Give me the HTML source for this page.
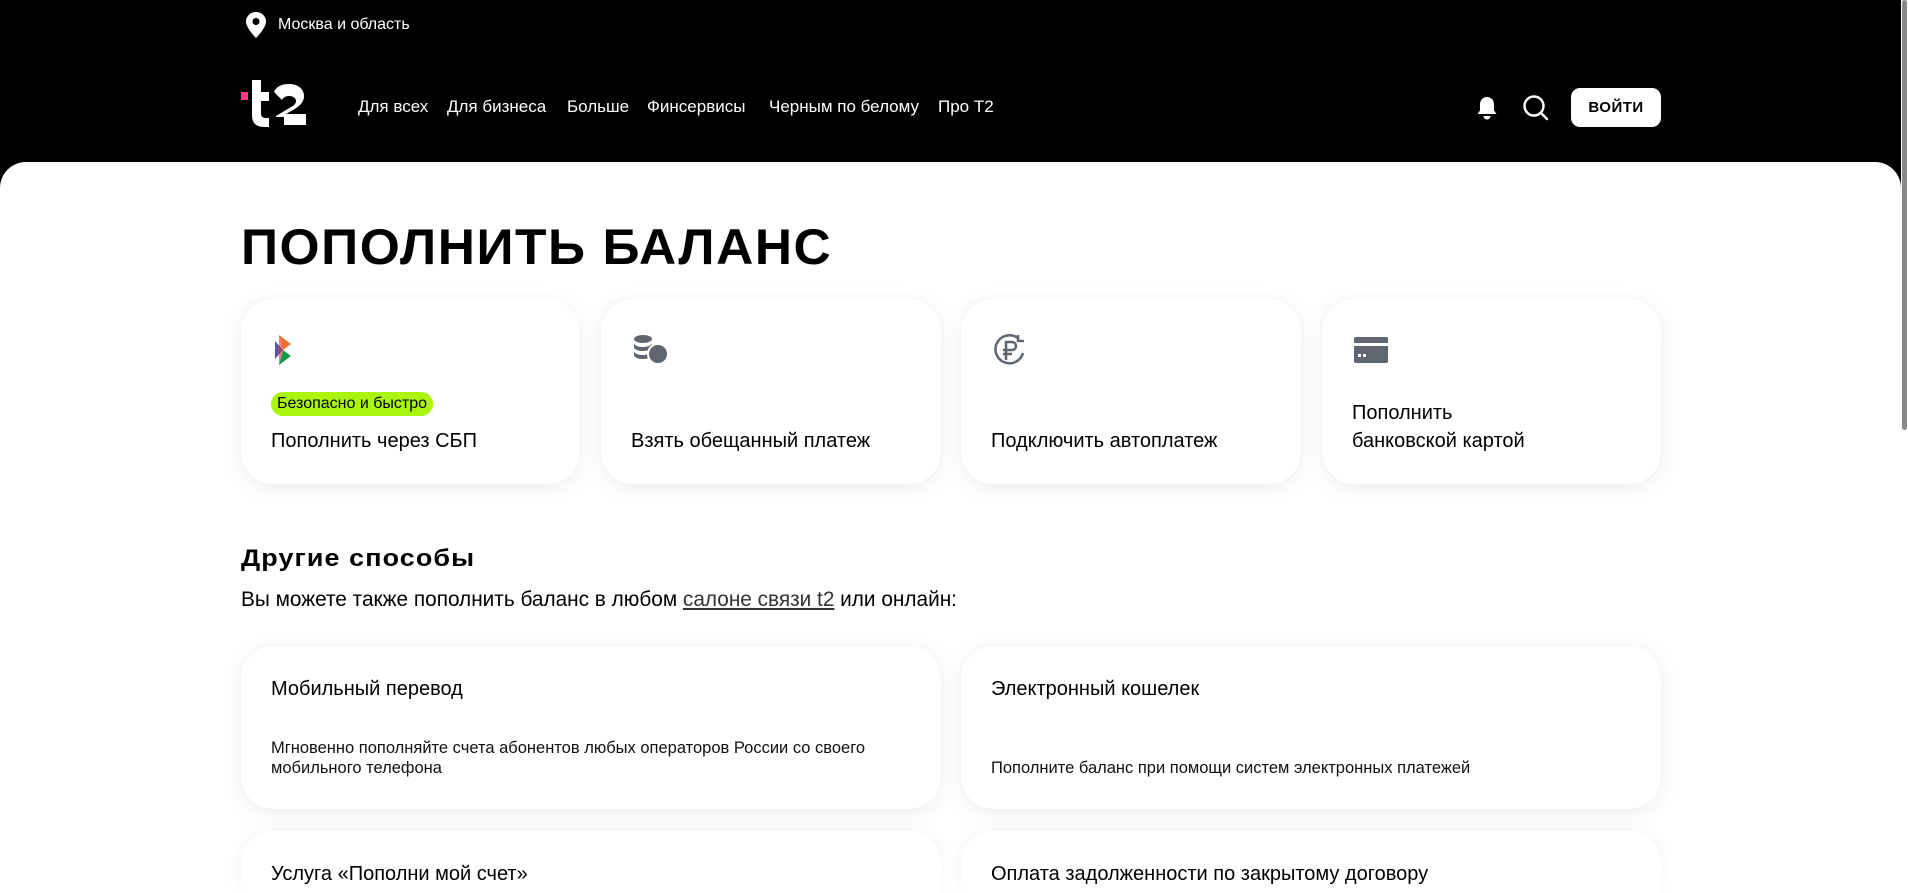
<!DOCTYPE html>
<html><head><meta charset="utf-8">
<style>
*{margin:0;padding:0;box-sizing:border-box}
html,body{width:1908px;height:893px;overflow:hidden;background:#000;font-family:"Liberation Sans",sans-serif;color:#000}
#w{position:relative;width:1908px;height:893px;overflow:hidden}
.top{position:absolute;left:0;top:0;width:1908px;height:170px;background:#000;color:#fff}
.loc{position:absolute;left:246px;top:12px;display:flex;align-items:center;font-size:16px}
.loc svg{margin-right:12px}
.logo{position:absolute;left:241px;top:80px}
.nav{position:absolute;left:358px;top:97px;font-size:17px;display:flex;gap:0}
.nav span{position:absolute;white-space:nowrap}
.btn{position:absolute;left:1571px;top:88px;width:90px;height:39px;background:#fff;color:#000;border-radius:9px;font-weight:900;font-size:15px;letter-spacing:0.5px;display:flex;align-items:center;justify-content:center}
.panel{position:absolute;left:0;top:162px;width:1901px;height:731px;background:#fff;border-radius:26px 26px 0 0}
.sb{position:absolute;left:1901px;top:0;width:7px;height:893px;background:#fff}
.sb i{position:absolute;left:1px;top:0;width:5px;height:430px;background:#8a8a8a;border-radius:3px}
h1{position:absolute;left:241px;top:218px;font-size:50px;font-weight:900;letter-spacing:1.5px;transform:scaleX(1.03);transform-origin:left;white-space:nowrap}
.card{position:absolute;background:#fff;border-radius:32px;box-shadow:0 4px 22px rgba(0,0,0,0.07),0 0 3px rgba(0,0,0,0.03)}
.card.cut{border-radius:32px 32px 0 0;box-shadow:0 -2px 16px rgba(0,0,0,0.05)}
.ico{position:absolute;left:30px;top:36px}
.ct{position:absolute;left:30px;font-size:20px;line-height:28px}
.badge{position:absolute;left:30px;top:93px;height:24px;padding:0 6px;background:#a9f50f;border-radius:12px;font-size:16px;line-height:24px}
h2{position:absolute;left:241px;top:545px;font-size:24px;font-weight:900;letter-spacing:1px;transform:scaleX(1.12);transform-origin:left}
.p{position:absolute;left:241px;top:588px;font-size:20.8px;white-space:nowrap}
.p u{color:#333}
.d{position:absolute;left:30px;font-size:16.5px;line-height:20px;color:#111}
</style></head><body><div id="w">
<div class="top">
 <div class="loc"><svg width="20" height="26" viewBox="0 0 20 26"><path d="M10 0C4.5 0 0 4.3 0 9.6 0 16 10 26 10 26s10-10 10-16.4C20 4.3 15.5 0 10 0z" fill="#fff"/><circle cx="10" cy="9.5" r="3.5" fill="#000"/></svg>Москва и область</div>
 <svg class="logo" width="72" height="50" viewBox="0 0 72 50">
  <rect x="0" y="12" width="7" height="8" fill="#ff3495"/>
  <path d="M11 0h9v12h8v9h-8v12c0 4 2 5 5 5h3v9h-5c-8 0-12-4-12-12z" fill="#fff"/>
  <path d="M33 12c2-5 7-8 15-8 9 0 15 5 15 12 0 6-4 10-11 14l-7 4h20v11H35v-9l15-9c4-2 5-4 5-6 0-3-3-5-7-5-4 0-6 2-7 4z" fill="#fff"/>
  <rect x="33" y="37" width="10" height="11" fill="#000"/>
 </svg>
 <div class="nav">
  <span style="left:0">Для всех</span>
  <span style="left:89px">Для бизнеса</span>
  <span style="left:209px">Больше</span>
  <span style="left:289px">Финсервисы</span>
  <span style="left:411px">Черным по белому</span>
  <span style="left:580px">Про Т2</span>
 </div>
 <svg style="position:absolute;left:1476px;top:96px" width="22" height="24" viewBox="0 0 22 24"><path d="M11 1c-4.5 0-7 3.5-7 7.5v6L1.5 18h19L18 14.5v-6C18 4.5 15.5 1 11 1z" fill="#fff"/><path d="M7.5 20h7c0 2-1.5 3.5-3.5 3.5S7.5 22 7.5 20z" fill="#fff"/></svg>
 <svg style="position:absolute;left:1522px;top:94px" width="28" height="28" viewBox="0 0 28 28"><circle cx="12" cy="12" r="9.5" fill="none" stroke="#fff" stroke-width="2.4"/><path d="M19 19l6 6" stroke="#fff" stroke-width="2.4" stroke-linecap="round"/></svg>
 <div class="btn">ВОЙТИ</div>
</div>
<div class="panel"></div>
<div class="sb"><i></i></div>
<h1>ПОПОЛНИТЬ БАЛАНС</h1>

<div class="card" style="left:241px;top:299px;width:339px;height:185px">
 <svg class="ico" style="left:34px;top:36px" width="16" height="30" viewBox="0 0 16 30"><path d="M0 6l8 9L0 24z" fill="#5b57a2"/><path d="M4 0l12 9-8 6z" fill="#ed702f"/><path d="M8 15l8 6-12 9z" fill="#0f9a4b"/><path d="M4 0l4 15-4 15z" fill="#e32d3b" opacity=".6"/></svg>
 <div class="badge">Безопасно и быстро</div>
 <div class="ct" style="top:128px">Пополнить через СБП</div>
</div>
<div class="card" style="left:601px;top:299px;width:340px;height:185px">
 <svg class="ico" style="left:32px;top:36px" width="38" height="30" viewBox="0 0 38 30"><ellipse cx="10" cy="4" rx="9" ry="4" fill="#5f6670"/><path d="M1 8c0 2.2 4 4 9 4s9-1.8 9-4v4c0 2.2-4 4-9 4s-9-1.8-9-4z" fill="#5f6670"/><path d="M1 16c0 2.2 4 4 9 4s9-1.8 9-4v4c0 2.2-4 4-9 4s-9-1.8-9-4z" fill="#5f6670"/><circle cx="25" cy="19" r="10" fill="#5f6670" stroke="#fff" stroke-width="2"/></svg>
 <div class="ct" style="top:128px">Взять обещанный платеж</div>
</div>
<div class="card" style="left:961px;top:299px;width:340px;height:185px">
 <svg class="ico" style="left:32px;top:34px" width="36" height="34" viewBox="0 0 36 34"><path d="M26 6A14 14 0 1 0 30 20" fill="none" stroke="#5f6670" stroke-width="2.5"/><path d="M25 2v6h6" fill="none" stroke="#5f6670" stroke-width="2.5"/><path d="M13 27V9h6a4 4 0 0 1 0 8h-9M10 21h9" fill="none" stroke="#5f6670" stroke-width="2.5"/></svg>
 <div class="ct" style="top:128px">Подключить автоплатеж</div>
</div>
<div class="card" style="left:1322px;top:299px;width:339px;height:185px">
 <svg class="ico" style="left:32px;top:38px" width="34" height="26" viewBox="0 0 34 26"><rect x="0" y="0" width="34" height="26" rx="2" fill="#5f6670"/><rect x="0" y="6" width="34" height="3" fill="#fff"/><rect x="4" y="17" width="3" height="3" fill="#fff"/><rect x="9" y="17" width="3" height="3" fill="#fff"/></svg>
 <div class="ct" style="top:100px">Пополнить<br>банковской картой</div>
</div>

<h2>Другие способы</h2>
<div class="p">Вы можете также пополнить баланс в любом <u>салоне связи t2</u> или онлайн:</div>

<div class="card" style="left:241px;top:646px;width:700px;height:163px">
 <div class="ct" style="top:29px">Мобильный перевод</div>
 <div class="d" style="top:92px">Мгновенно пополняйте счета абонентов любых операторов России со своего<br>мобильного телефона</div>
</div>
<div class="card" style="left:961px;top:646px;width:700px;height:163px">
 <div class="ct" style="top:29px">Электронный кошелек</div>
 <div class="d" style="top:112px">Пополните баланс при помощи систем электронных платежей</div>
</div>
<div class="card cut" style="left:241px;top:831px;width:700px;height:62px">
 <div class="ct" style="top:29px">Услуга «Пополни мой счет»</div>
</div>
<div class="card cut" style="left:961px;top:831px;width:700px;height:62px">
 <div class="ct" style="top:29px">Оплата задолженности по закрытому договору</div>
</div>
</div></body></html>
